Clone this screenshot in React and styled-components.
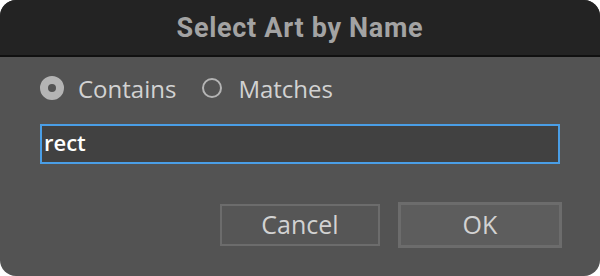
import React, { useState } from "react"
import styled, { createGlobalStyle } from "styled-components"

const GlobalStyle = createGlobalStyle`
  html, body {
    margin: 0;
    padding: 0;
    background: #ffffff;
  }
`

const Window = styled.div`
  width: 600px;
  height: 276px;
  border-radius: 16px;
  overflow: hidden;
  background: #535353;
  display: flex;
  flex-direction: column;
`

const TitleBar = styled.div`
  height: 55px;
  flex: none;
  background: #232323;
  border-bottom: 2px solid #101010;
  display: flex;
  align-items: center;
  justify-content: center;
  font-family: Roboto, "Liberation Sans", sans-serif;
  font-weight: 700;
  font-size: 27px;
  letter-spacing: 0.7px;
  color: #a3a3a3;
`

const Body = styled.div`
  flex: 1;
  display: flex;
  flex-direction: column;
  padding: 15px 40px 0 40px;
  font-family: "Open Sans", "Liberation Sans", sans-serif;
  color: #d2d2d2;
`

const RadioRow = styled.div`
  display: flex;
  align-items: center;
  height: 32px;
  gap: 24px;
`

const RadioLabel = styled.label`
  display: flex;
  align-items: center;
  gap: 14px;
  font-size: 24px;
  cursor: default;
`

const RadioDot = styled.span`
  width: ${({ $checked }) => ($checked ? "24px" : "20px")};
  height: ${({ $checked }) => ($checked ? "24px" : "20px")};
  margin: ${({ $checked }) => ($checked ? "0" : "0 2px")};
  border-radius: 50%;
  box-sizing: border-box;
  border: ${({ $checked }) => ($checked ? "8px solid #b4b4b4" : "2px solid #b4b4b4")};
  background: ${({ $checked }) => ($checked ? "#535353" : "transparent")};
`

const NameInput = styled.input`
  margin-top: 20px;
  width: 520px;
  height: 40px;
  box-sizing: border-box;
  border: 2px solid #4a9ee6;
  background: #414141;
  color: #ffffff;
  font-family: "Open Sans", "Liberation Sans", sans-serif;
  font-weight: 600;
  font-size: 22px;
  padding: 0 2px 4px 2px;
  outline: none;
`

const ButtonRow = styled.div`
  margin-top: 38px;
  display: flex;
  justify-content: flex-end;
  align-items: center;
  gap: 18px;
  margin-right: -2px;
`

const Button = styled.button`
  width: ${({ $primary }) => ($primary ? "164px" : "160px")};
  height: ${({ $primary }) => ($primary ? "46px" : "42px")};
  box-sizing: border-box;
  border: ${({ $primary }) => ($primary ? "3px" : "2px")} solid #6c6c6c;
  background: ${({ $primary }) => ($primary ? "#5d5d5d" : "#565656")};
  color: #d2d2d2;
  font-family: "Open Sans", "Liberation Sans", sans-serif;
  font-size: 25px;
  padding: 0 0 2px 0;
  cursor: default;
`

const App = () => {
  const [mode, setMode] = useState("contains")
  const [name, setName] = useState("rect")

  return (
    <>
      <GlobalStyle />
      <Window>
        <TitleBar>Select Art by Name</TitleBar>
        <Body>
          <RadioRow>
            <RadioLabel onClick={() => setMode("contains")}>
              <RadioDot $checked={mode === "contains"} />
              Contains
            </RadioLabel>
            <RadioLabel onClick={() => setMode("matches")}>
              <RadioDot $checked={mode === "matches"} />
              Matches
            </RadioLabel>
          </RadioRow>
          <NameInput value={name} onChange={(e) => setName(e.target.value)} />
          <ButtonRow>
            <Button>Cancel</Button>
            <Button $primary>OK</Button>
          </ButtonRow>
        </Body>
      </Window>
    </>
  )
}

export default App
